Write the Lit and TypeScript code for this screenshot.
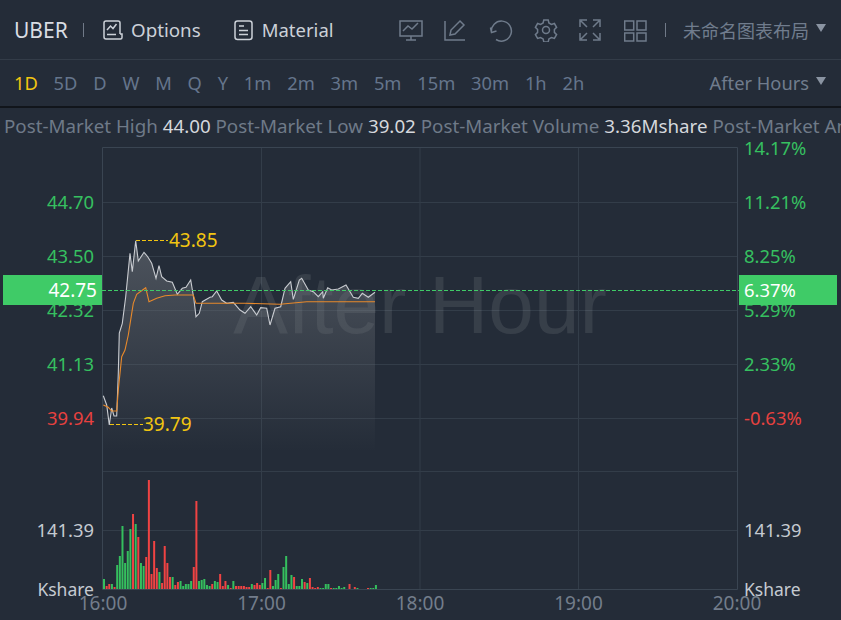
import { LitElement, html, css, svg } from "lit";
import { customElement } from "lit/decorators.js";

const WHITE: [number, number][] = [[103.3,395.7],[106.7,405],[109.3,425],[111.7,408],[114,416],[116.7,416],[118.3,373],[119.3,333],[122.3,323.3],[125.7,296.7],[130,253.3],[132.3,271.7],[135.7,240.7],[138.3,261],[144,252.3],[147.7,256.7],[151.7,263.3],[156,278.3],[159,265.7],[161.7,276.7],[166.7,281],[172.3,282.3],[177.3,294.3],[182.3,288.3],[186,287.3],[190.7,280],[194,300],[196,316.7],[199.3,313.3],[202.3,301.7],[210,297.3],[212.3,296.7],[216.7,291],[221.7,300],[226.7,303.3],[233.3,302.3],[240,310],[245,313.3],[250.7,306.7],[256.7,315],[260.7,307.7],[266.7,308.3],[270,325],[275,308.3],[280.7,306.7],[285,288.3],[290.7,281.7],[293.3,299.3],[299.3,280],[301.7,278.3],[308.3,290],[313.3,291.7],[318.3,296.7],[322.7,291.7],[323.3,298.3],[327.7,287.7],[331.7,290],[338.3,289],[346,285],[353.3,297.3],[358.3,298.3],[362.3,293.3],[368.3,297.3],[375,292.3]];
const ORANGE: [number, number][] = [[103.3,405],[108.3,407.3],[111.7,411],[116.7,411],[118.3,390],[121.7,356.7],[125,350],[128.3,335],[133.3,303.3],[136.7,294.3],[145.7,287.7],[149,301.7],[156.7,298.3],[165,295.7],[175,295],[193.3,295],[196,303.3],[245,303.3],[280,304.3],[306.7,301.7],[375,301.7]];
// [height, up?] one bar a minute from 16:00
const BARS: [number, number][] = [[10,1],[3,0],[5,0],[5,1],[2,0],[24,1],[33,1],[63,1],[26,1],[38,1],[60,1],[75,0],[65,1],[52,0],[26,1],[23,1],[32,0],[109,0],[15,0],[48,0],[21,0],[17,1],[6,0],[43,0],[26,0],[12,0],[12,1],[4,0],[7,0],[8,1],[3,1],[5,1],[5,1],[8,1],[22,0],[88,0],[8,1],[9,1],[10,1],[4,1],[3,1],[5,0],[8,1],[7,1],[15,0],[3,0],[8,0],[4,1],[1,0],[8,1],[3,0],[3,0],[3,0],[3,0],[2,0],[2,0],[5,1],[4,0],[6,0],[4,0],[6,1],[11,1],[1,0],[19,0],[3,1],[9,1],[15,1],[1,0],[22,1],[33,1],[5,1],[14,1],[12,0],[3,1],[3,1],[10,1],[7,0],[6,1],[11,0],[2,0],[1,0],[2,0],[1,1],[1,1],[5,1],[5,1],[1,0],[1,1],[1,1],[3,1],[1,1],[2,1],[0,1],[5,0],[0,1],[2,0],[1,1],[0,1],[0,1],[0,1],[1,0],[1,1],[1,1],[4,1]];

const LEFT: [string, number, string][] = [["44.70",202,"up"],["43.50",256,"up"],["42.32",310,"up"],["41.13",364,"up"],["39.94",418,"down"],["141.39",530,"neutral"],["Kshare",589,"neutral unit"]];
const RIGHT: [string, number, string][] = [["14.17%",148,"up"],["11.21%",202,"up"],["8.25%",256,"up"],["5.29%",310,"up"],["2.33%",364,"up"],["-0.63%",418,"down"],["141.39",530,"neutral"],["Kshare",589,"neutral unit"]];
const TIMES: [string, number][] = [["16:00",103],["17:00",261.5],["18:00",420],["19:00",578.5],["20:00",737]];
const PERIODS = ["5D","D","W","M","Q","Y","1m","2m","3m","5m","15m","30m","1h","2h"];
const pts = (a: [number, number][]) => a.map((p) => p.join(",")).join(" ");

@customElement("app-root")
export class AppRoot extends LitElement {
  static styles = css`
    :host { display: block; width: 841px; height: 620px; overflow: hidden; background: #242c38;
      font-family: "Noto Sans", "Noto Sans CJK SC", sans-serif; font-size: 18.750px; }
    .top { height: 59px; display: flex; align-items: center; padding: 0 15px 0 14px; border-bottom: 1px solid #333c48; }
    .sym { font-size: 21px; color: #d9dde3; width: 54px; }
    .div { width: 1px; height: 14px; background: #707a88; }
    .d1 { margin: 0 19px 0 15px; }
    .d2 { margin-left: 17px; }
    .link { display: flex; align-items: center; gap: 8px; color: #ccd1d8; }
    .link svg { width: 20px; height: 22px; fill: none; stroke: #ccd1d8; stroke-width: 1.5; display: block; }
    .link.mat { margin-left: 33px; gap: 8px; font-size: 18.500px; }
    .tools { display: flex; gap: 21px; margin-left: 65px; }
    .tools svg { width: 24px; height: 24px; fill: none; stroke: #6f7b8b; stroke-width: 1.5; display: block; }
    .select { display: flex; align-items: center; gap: 7px; color: #707c8d; }
    .cjk { font-size: 18px; }
    .caret { width: 0; height: 0; border-left: 5.500px solid transparent; border-right: 5.500px solid transparent; border-top: 8px solid #8a94a2; margin-top: -3px; }
    .periods { height: 44px; display: flex; align-items: center; padding: 0 15px 2px 14px; gap: 15.800px; color: #65758c; font-size: 18.300px; border-bottom: 2px solid #11151b; }
    .active { color: #f2c511; }
    .spacer { flex: 1; }
    .info { height: 30px; line-height: 36px; padding-left: 4px; white-space: nowrap; overflow: hidden; color: #6f7a88; }
    .info b { font-weight: 400; color: #d5d8dd; }
    .chart { display: block; width: 841px; height: 482px; }
    .chart text { font-size: 18.400px; font-family: "Noto Sans", sans-serif; }
    .chart text.mark { font-size: 82px; font-family: "Liberation Sans", sans-serif; fill: #fff; fill-opacity: 0.09; }
    .chart text.unit { font-size: 17.500px; }
    .chart text.big { font-size: 19px; }
    .up { fill: #36c060; }
    .down { fill: #e8413f; }
    .neutral { fill: #c5cad1; }
    .time { fill: #737d8b; }
    .yellow { fill: #f2c511; }
    .grid { stroke: #333d49; stroke-width: 1; }
    .frame { stroke: #3a4552; stroke-width: 1; fill: none; }
    .badge { fill: #3fcb67; }
    .badge-text { fill: #fff; }
    .dash-y { stroke: #f2c511; stroke-width: 1; stroke-dasharray: 4 2; fill: none; }
    .dash-g { stroke: #3fcb67; stroke-width: 1; stroke-dasharray: 4 2; fill: none; }
  `;

  private chart() {
    const vs = [261.5, 420, 578.5];
    const hs = [202, 256, 310, 364, 418, 471, 530];
    const area = `103.3,450 ${pts(WHITE)} 375,450`;
    return html`<svg class="chart" viewBox="0 0 841 482">
      <defs>
        <linearGradient id="fade" gradientUnits="userSpaceOnUse" x1="0" y1="240" x2="0" y2="452">
          <stop offset="0" stop-color="#70757c" stop-opacity="0.55" />
          <stop offset="1" stop-color="#70757c" stop-opacity="0" />
        </linearGradient>
      </defs>
      <g transform="translate(0 -138)">
        ${hs.map((y) => svg`<line class="grid" x1="102" x2="737" y1=${y + 0.5} y2=${y + 0.5} />`)}
        ${vs.map((x) => svg`<line class="grid" x1=${x} x2=${x} y1="148" y2="589" />`)}
        <polyline class="frame" points="102.5,589.5 102.5,147.5 737.5,147.5 737.5,589.5 102.5,589.5" />
        <text class="mark" x="420" y="333" text-anchor="middle">After Hour</text>
        <polygon points=${area} fill="url(#fade)" />
        ${BARS.map(([h, up], i) => h ? svg`<rect x=${(103 + i * 2.64).toFixed(2)} y=${589 - h} width="2" height=${h} fill=${up ? "#35bf5e" : "#f04343"} />` : "")}
        <polyline points=${pts(WHITE)} fill="none" stroke="#c9ccd1" stroke-width="1.1" />
        <polyline points=${pts(ORANGE)} fill="none" stroke="#e8892b" stroke-width="1.1" />
        <line class="dash-y" x1="136" x2="168" y1="240.5" y2="240.5" />
        <text class="yellow big" x="169" y="247">43.85</text>
        <line class="dash-y" x1="110" x2="143" y1="424.5" y2="424.5" />
        <text class="yellow big" x="143" y="431">39.79</text>
        ${LEFT.map(([t, y, c]) => svg`<text class=${c} x="94" y=${y + 7} text-anchor="end">${t}</text>`)}
        ${RIGHT.map(([t, y, c]) => svg`<text class=${c} x="744" y=${y + 7}>${t}</text>`)}
        ${TIMES.map(([t, x]) => svg`<text class="time big" x=${x} y="610" text-anchor="middle">${t}</text>`)}
        <rect class="badge" x="3" y="275" width="99" height="30" />
        <rect class="badge" x="739" y="275" width="98" height="30" />
        <line class="dash-g" x1="102" x2="739" y1="290.5" y2="290.5" />
        <text class="badge-text big" x="97" y="297" text-anchor="end">42.75</text>
        <text class="badge-text" x="744" y="297">6.37%</text>
      </g>
    </svg>`;
  }

  render() {
    return html`
      <div class="top">
        <span class="sym">UBER</span><span class="div d1"></span>
        <span class="link">
          <svg viewBox="0 0 20 22"><path d="M17 15V4a2 2 0 0 0-2-2H3a2 2 0 0 0-2 2v14a2 2 0 0 0 2 2h14.500a1.500 1.500 0 0 0 1.500-1.500V15h-2" /><path d="M4 11l3.500-4 2.500 2.500 3.500-4.500M4 15.500h9" /></svg>
          Options
        </span>
        <span class="link mat">
          <svg viewBox="0 0 20 22"><rect x="1" y="2" width="17" height="18.500" rx="2.500" /><path d="M5 7h5M5 11.500h9M5 15.500h9" /></svg>
          Material
        </span>
        <span class="tools">
          <svg viewBox="0 0 24 24"><rect x="1" y="3" width="22" height="15" /><path d="M4 13l5-5 4 3 6-6M12 18v4M7 22h10" /></svg>
          <svg viewBox="0 0 24 24"><path d="M1 3v19h20M6 17l1-5L16 3l4 4-9 9z" /></svg>
          <svg viewBox="0 0 24 24"><path d="M2.500 14.500A10 10 0 1 1 7 21.500M1.500 9.500l1 5 5-1.500" /></svg>
          <svg viewBox="0 0 24 24"><circle cx="12" cy="12" r="3.500" /><path d="M9.800 2h4.400l.7 3 2.500 1.400 3-.9 2.200 3.800-2.200 2.200v2.900l2.200 2.200-2.200 3.800-3-.9-2.500 1.400-.7 3H9.800l-.7-3-2.500-1.400-3 .9-2.200-3.800 2.200-2.200v-2.900L1.400 9.300l2.200-3.800 3 .9L9.100 5z" /></svg>
          <svg viewBox="0 0 24 24"><path d="M1 9V2h7M14 2h7v7M21 15v7h-7M8 22H1v-7M2 3l6 6M20 3l-6 6M20 21l-6-6M2 21l6-6" /></svg>
          <svg viewBox="0 0 24 24"><path d="M.7 3h9v9h-9zM13 3h9v9h-9zM.7 15h9v8h-9zM13 15h9v8h-9z" /></svg>
        </span>
        <span class="div d2"></span>
        <span class="spacer"></span>
        <span class="select"><span class="cjk">未命名图表布局</span><i class="caret"></i></span>
      </div>
      <div class="periods">
        <span class="active">1D</span>
        ${PERIODS.map((p) => html`<span>${p}</span>`)}
        <span class="spacer"></span>
        <span class="select">After Hours<i class="caret"></i></span>
      </div>
      <div class="info">Post-Market High <b>44.00</b> Post-Market Low <b>39.02</b> Post-Market Volume <b>3.36Mshare</b> Post-Market Amount <b>147.5M</b></div>
      ${this.chart()}
    `;
  }
}
